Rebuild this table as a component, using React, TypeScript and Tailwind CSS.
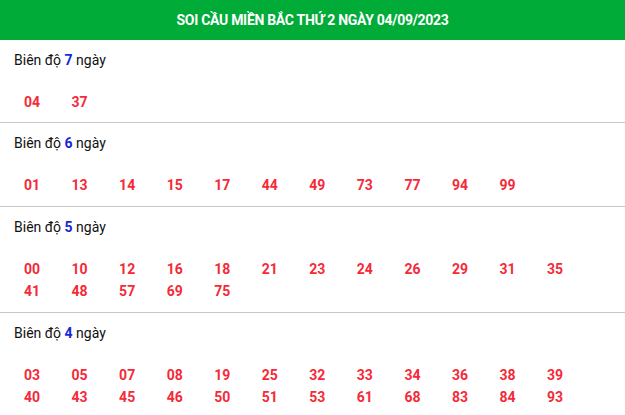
import React from "react";

const sections: { d: number; nums: string[] }[] = [
  { d: 7, nums: ["04", "37"] },
  { d: 6, nums: ["01", "13", "14", "15", "17", "44", "49", "73", "77", "94", "99"] },
  {
    d: 5,
    nums: ["00", "10", "12", "16", "18", "21", "23", "24", "26", "29", "31", "35", "41", "48", "57", "69", "75"],
  },
  {
    d: 4,
    nums: [
      "03", "05", "07", "08", "19", "25", "32", "33", "34", "36", "38", "39",
      "40", "43", "45", "46", "50", "51", "53", "61", "68", "83", "84", "93",
    ],
  },
];

export default function App() {
  return (
    <div className="w-[625px] h-[415px] overflow-hidden bg-white" style={{ fontFamily: "Roboto, 'Liberation Sans', sans-serif" }}>
      <div className="h-[40px] bg-[#00ab38] flex items-center justify-center">
        <span className="text-white font-bold text-[14px] tracking-[-0.3px]">SOI CẦU MIỀN BẮC THỨ 2 NGÀY 04/09/2023</span>
      </div>
      {sections.map((s, i) => (
        <div
          key={s.d}
          className={
            (i === 0 ? "pt-[10px] pb-[9px] " : "pt-[10px] pb-[10px] ") +
            (i < sections.length - 1 ? "border-b border-[#c8c8c8]" : "")
          }
        >
          <div className="pl-[14px] text-[14px] leading-[20px] text-[#111]">
            Biên độ <span className="font-bold text-[#1428d8]">{s.d}</span> ngày
          </div>
          <div className="mt-[21px] pl-[24px] grid grid-cols-[repeat(12,47.55px)]">
            {s.nums.map((n) => (
              <span key={n} className="text-[14px] leading-[22px] font-bold text-[#f52a38]">
                {n}
              </span>
            ))}
          </div>
        </div>
      ))}
    </div>
  );
}
